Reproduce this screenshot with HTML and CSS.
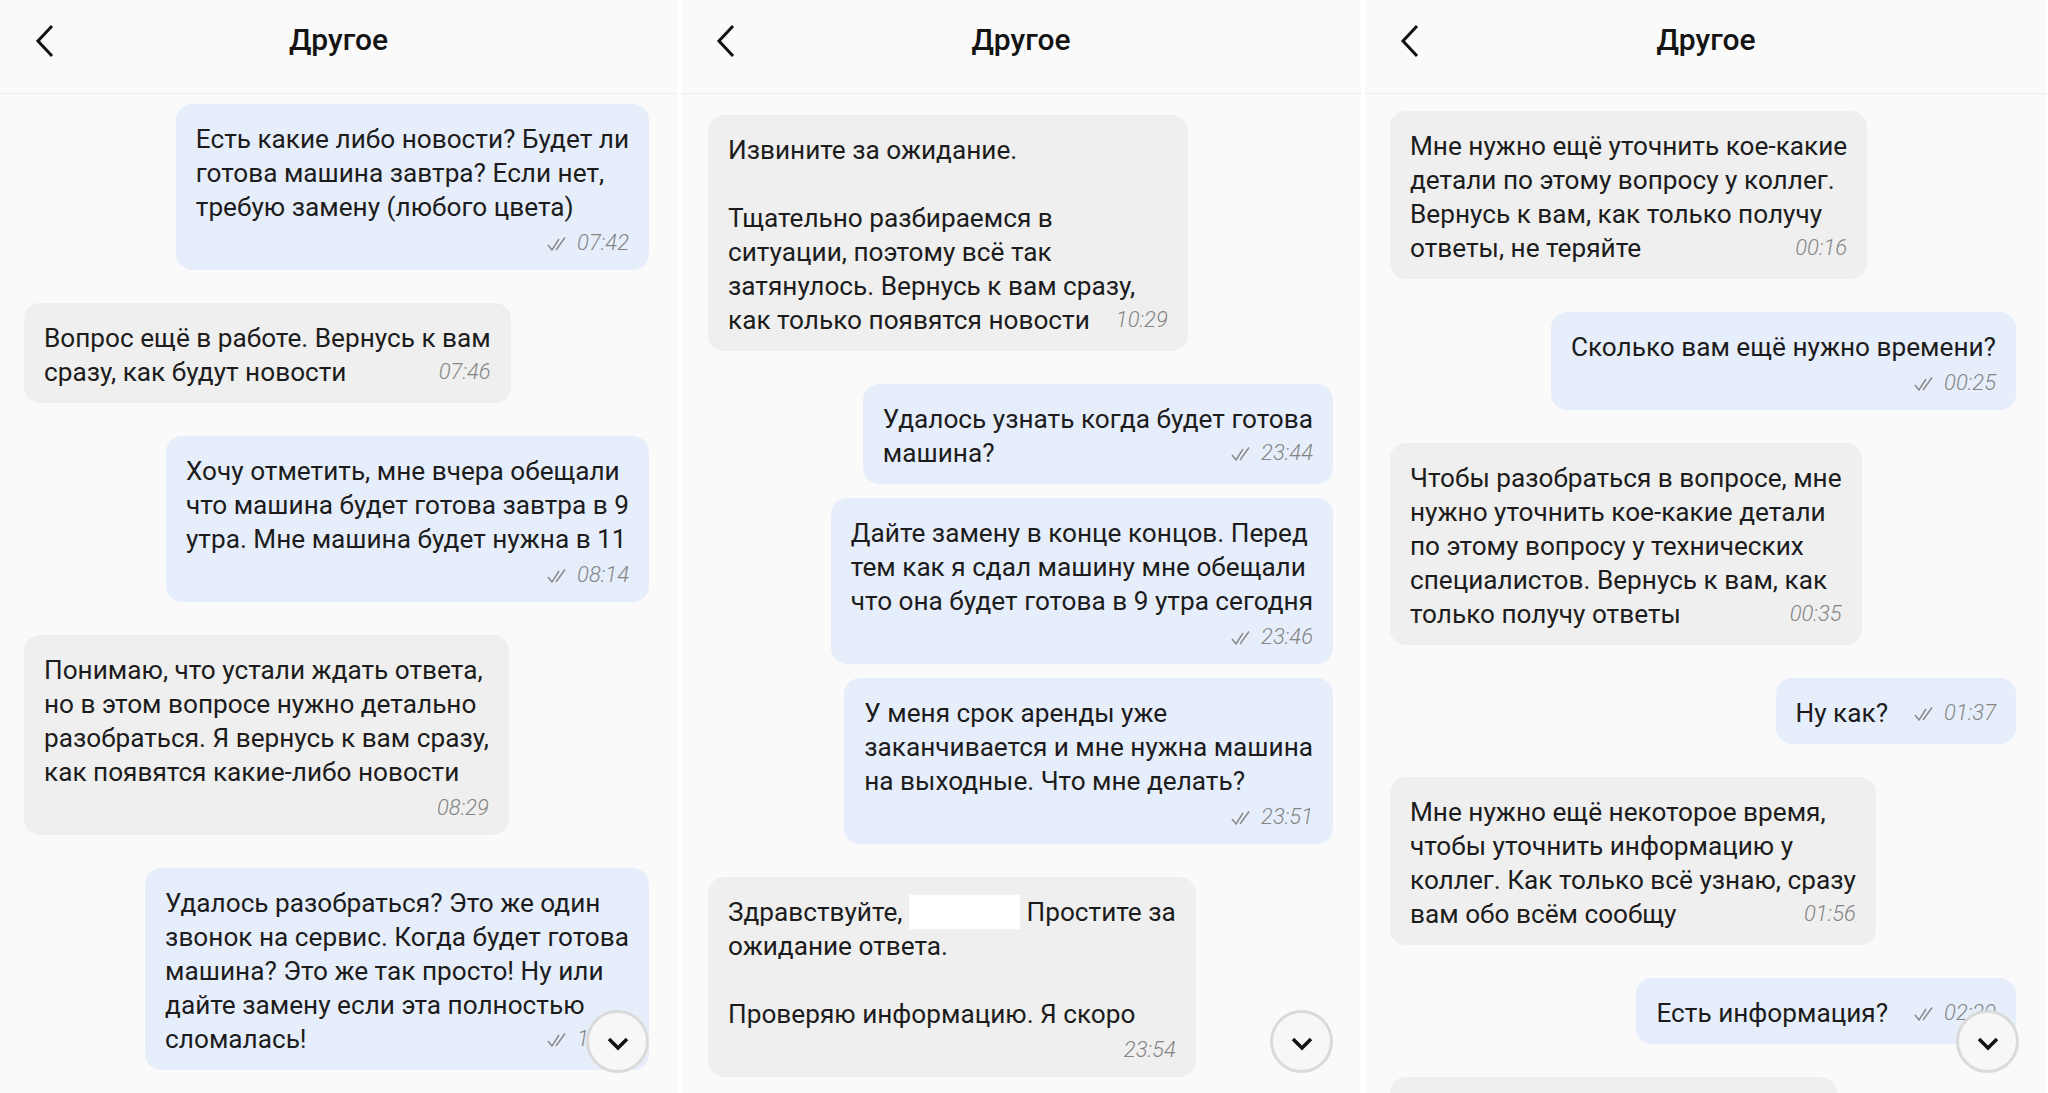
FILE: index.html
```html
<!DOCTYPE html>
<html lang="ru">
<head>
    <meta charset="UTF-8">
    <meta name="viewport" content="width=device-width, initial-scale=1.0">
    <title>Другое — переписка</title>
    <link rel="stylesheet" href="styles.css">
</head>
<body>
    <div class="screens">

        <!-- экран 1 -->
        <div class="screen">
            <div class="topbar">
                <span class="back"><svg width="20" height="34" viewBox="0 0 20 34"><path d="M17 2 L3 17 L17 32" fill="none" stroke="#111" stroke-width="3"/></svg></span>
                <h1>Другое</h1>
            </div>
            <div class="chat">
                <div class="msg out">
                    Есть какие либо новости? Будет ли<br>готова машина завтра? Если нет,<br>требую замену (любого цвета)
                    <div class="meta"><svg class="ticks" width="19" height="15" viewBox="0 0 19 15"><path d="M1 9 L5 14 L12 3 M9 14 L18 1.5" fill="none" stroke="#8a8a8a" stroke-width="1.5"/></svg>07:42</div>
                </div>
                <div class="msg in">
                    Вопрос ещё в работе. Вернусь к вам
                    <div class="row"><span>сразу, как будут новости</span><span class="meta">07:46</span></div>
                </div>
                <div class="msg out">
                    Хочу отметить, мне вчера обещали<br>что машина будет готова завтра в 9<br>утра. Мне машина будет нужна в 11
                    <div class="meta"><svg class="ticks" width="19" height="15" viewBox="0 0 19 15"><path d="M1 9 L5 14 L12 3 M9 14 L18 1.5" fill="none" stroke="#8a8a8a" stroke-width="1.5"/></svg>08:14</div>
                </div>
                <div class="msg in">
                    Понимаю, что устали ждать ответа,<br>но в этом вопросе нужно детально<br>разобраться. Я вернусь к вам сразу,<br>как появятся какие-либо новости
                    <div class="meta">08:29</div>
                </div>
                <div class="msg out">
                    Удалось разобраться? Это же один<br>звонок на сервис. Когда будет готова<br>машина? Это же так просто! Ну или<br>дайте замену если эта полностью
                    <div class="row"><span>сломалась!</span><span class="meta"><svg class="ticks" width="19" height="15" viewBox="0 0 19 15"><path d="M1 9 L5 14 L12 3 M9 14 L18 1.5" fill="none" stroke="#8a8a8a" stroke-width="1.5"/></svg>10:12</span></div>
                </div>
            </div>
            <button class="scroll-down"><svg width="24" height="15" viewBox="0 0 24 15"><path d="M3 3 L12 12 L21 3" fill="none" stroke="#111" stroke-width="3.4"/></svg></button>
        </div>

        <!-- экран 2 -->
        <div class="screen">
            <div class="topbar">
                <span class="back"><svg width="20" height="34" viewBox="0 0 20 34"><path d="M17 2 L3 17 L17 32" fill="none" stroke="#111" stroke-width="3"/></svg></span>
                <h1>Другое</h1>
            </div>
            <div class="chat chat-2">
                <div class="msg in">
                    Извините за ожидание.<br><br>Тщательно разбираемся в<br>ситуации, поэтому всё так<br>затянулось. Вернусь к вам сразу,
                    <div class="row"><span>как только появятся новости</span><span class="meta">10:29</span></div>
                </div>
                <div class="msg out">
                    Удалось узнать когда будет готова
                    <div class="row"><span>машина?</span><span class="meta"><svg class="ticks" width="19" height="15" viewBox="0 0 19 15"><path d="M1 9 L5 14 L12 3 M9 14 L18 1.5" fill="none" stroke="#8a8a8a" stroke-width="1.5"/></svg>23:44</span></div>
                </div>
                <div class="msg out next">
                    Дайте замену в конце концов. Перед<br>тем как я сдал машину мне обещали<br>что она будет готова в 9 утра сегодня
                    <div class="meta"><svg class="ticks" width="19" height="15" viewBox="0 0 19 15"><path d="M1 9 L5 14 L12 3 M9 14 L18 1.5" fill="none" stroke="#8a8a8a" stroke-width="1.5"/></svg>23:46</div>
                </div>
                <div class="msg out next">
                    У меня срок аренды уже<br>заканчивается и мне нужна машина<br>на выходные. Что мне делать?
                    <div class="meta"><svg class="ticks" width="19" height="15" viewBox="0 0 19 15"><path d="M1 9 L5 14 L12 3 M9 14 L18 1.5" fill="none" stroke="#8a8a8a" stroke-width="1.5"/></svg>23:51</div>
                </div>
                <div class="msg in">
                    Здравствуйте, <span class="hidden-name"></span> Простите за<br>ожидание ответа.<br><br>Проверяю информацию. Я скоро
                    <div class="meta">23:54</div>
                </div>
            </div>
            <button class="scroll-down"><svg width="24" height="15" viewBox="0 0 24 15"><path d="M3 3 L12 12 L21 3" fill="none" stroke="#111" stroke-width="3.4"/></svg></button>
        </div>

        <!-- экран 3 -->
        <div class="screen">
            <div class="topbar">
                <span class="back"><svg width="20" height="34" viewBox="0 0 20 34"><path d="M17 2 L3 17 L17 32" fill="none" stroke="#111" stroke-width="3"/></svg></span>
                <h1>Другое</h1>
            </div>
            <div class="chat chat-3">
                <div class="msg in">
                    Мне нужно ещё уточнить кое-какие<br>детали по этому вопросу у коллег.<br>Вернусь к вам, как только получу
                    <div class="row"><span>ответы, не теряйте</span><span class="meta">00:16</span></div>
                </div>
                <div class="msg out">
                    Сколько вам ещё нужно времени?
                    <div class="meta"><svg class="ticks" width="19" height="15" viewBox="0 0 19 15"><path d="M1 9 L5 14 L12 3 M9 14 L18 1.5" fill="none" stroke="#8a8a8a" stroke-width="1.5"/></svg>00:25</div>
                </div>
                <div class="msg in">
                    Чтобы разобраться в вопросе, мне<br>нужно уточнить кое-какие детали<br>по этому вопросу у технических<br>специалистов. Вернусь к вам, как
                    <div class="row"><span>только получу ответы</span><span class="meta">00:35</span></div>
                </div>
                <div class="msg out">
                    <div class="row"><span>Ну как?</span><span class="meta"><svg class="ticks" width="19" height="15" viewBox="0 0 19 15"><path d="M1 9 L5 14 L12 3 M9 14 L18 1.5" fill="none" stroke="#8a8a8a" stroke-width="1.5"/></svg>01:37</span></div>
                </div>
                <div class="msg in">
                    Мне нужно ещё некоторое время,<br>чтобы уточнить информацию у<br>коллег. Как только всё узнаю, сразу
                    <div class="row"><span>вам обо всём сообщу</span><span class="meta">01:56</span></div>
                </div>
                <div class="msg out">
                    <div class="row"><span>Есть информация?</span><span class="meta"><svg class="ticks" width="19" height="15" viewBox="0 0 19 15"><path d="M1 9 L5 14 L12 3 M9 14 L18 1.5" fill="none" stroke="#8a8a8a" stroke-width="1.5"/></svg>02:29</span></div>
                </div>
                <div class="msg in stub"></div>
            </div>
            <button class="scroll-down"><svg width="24" height="15" viewBox="0 0 24 15"><path d="M3 3 L12 12 L21 3" fill="none" stroke="#111" stroke-width="3.4"/></svg></button>
        </div>

    </div>
</body>
</html>
```

FILE: styles.css
```css
body {
    margin: 0;
    background: #ffffff;
    font-family: Roboto, "Noto Sans", sans-serif;
    color: #1c1c1c;
}

.screens {
    display: grid;
    grid-template-columns: 677px 680px 682px;
    column-gap: 4px;
    height: 1093px;
    overflow: hidden;
}

.screen {
    position: relative;
    overflow: hidden;
    background: #fafafa;
    display: flex;
    flex-direction: column;
}

/* шапка */
.topbar {
    flex-shrink: 0;
    height: 93px;
    border-bottom: 1px solid #ececec;
    display: grid;
    grid-template-columns: 80px 1fr 80px;
    align-items: start;
}
.back {
    padding: 24px 0 0 35px;
}
.topbar h1 {
    margin: 0;
    padding-top: 21px;
    text-align: center;
    font-size: 30px;
    line-height: 38px;
    font-weight: 500;
    color: #141414;
}

/* переписка */
.chat {
    flex-shrink: 0;
    display: flex;
    flex-direction: column;
    padding: 10px 28px 0 24px;
}
.chat-2 {
    padding-top: 21px;
    padding-left: 27px;
}
.chat-3 {
    padding-top: 17px;
    padding-left: 25px;
    padding-right: 31px;
}

.msg {
    margin-top: 33px;
    padding: 18px 20px 14px;
    border-radius: 16px;
    font-size: 26.2px;
    line-height: 34px;
    white-space: nowrap;
}
.msg:first-child {
    margin-top: 0;
}
.msg.next {
    margin-top: 14px;
}
.in {
    align-self: flex-start;
    background: #efefef;
}
.out {
    align-self: flex-end;
    background: #e7eefb;
}
.stub {
    width: 407px;
    height: 80px;
}

.row {
    display: flex;
    justify-content: space-between;
    align-items: center;
    gap: 26px;
}

.meta {
    display: flex;
    justify-content: flex-end;
    align-items: center;
    gap: 11px;
    margin-top: 6px;
    font-size: 22px;
    line-height: 26px;
    font-style: italic;
    font-weight: 300;
    color: #858585;
}
.row .meta {
    margin-top: 0;
}
.ticks {
    display: block;
}

.hidden-name {
    display: inline-block;
    width: 111px;
    height: 34px;
    vertical-align: top;
    background: #ffffff;
}

.scroll-down {
    position: absolute;
    right: 28px;
    bottom: 20px;
    width: 63px;
    height: 63px;
    border-radius: 50%;
    border: 3px solid #dadada;
    background: #f7f7f7;
    display: flex;
    align-items: center;
    justify-content: center;
    padding: 0;
}
.scroll-down svg {
    margin-top: 3px;
}
```
